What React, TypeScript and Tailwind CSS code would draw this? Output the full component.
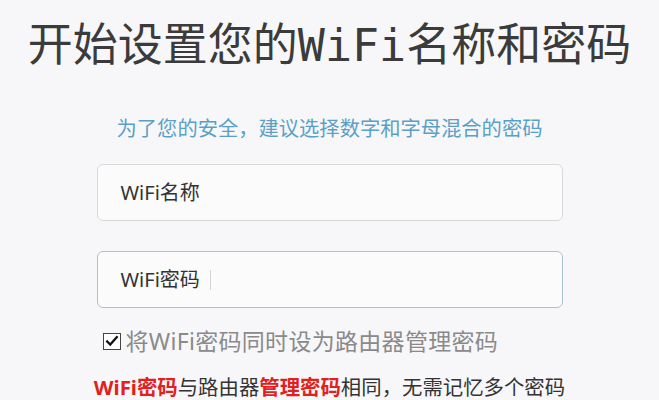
import React from "react";

const cjk = '"Noto Sans", "Noto Sans CJK SC", sans-serif';
const mono = '"DejaVu Sans Mono", "Noto Sans CJK SC", monospace';

function Field({ label, focused }: { label: string; focused?: boolean }) {
  return (
    <div
      className={
        "flex h-[57px] w-[466px] items-center rounded-[6px] bg-[#fbfbfc] pl-[23px] " +
        (focused
          ? "border-[1.5px] border-[#a8c3d2]"
          : "border border-[#d9d9dc]")
      }
    >
      <span className="text-[20px] leading-[20px] text-[#333]" style={{ fontFamily: cjk }}>
        {label}
      </span>
      {focused && <span className="ml-[10px] h-[20px] w-px bg-[#d4d4d4]" />}
    </div>
  );
}

export default function App() {
  return (
    <div className="flex h-[400px] w-[659px] flex-col items-center overflow-hidden bg-[#f7f7f9]">
      <h1
        className="mt-[23px] whitespace-nowrap text-[45px] font-normal leading-[45px] text-[#3b3b3b]"
        style={{ fontFamily: mono }}
      >
        开始设置您的WiFi名称和密码
      </h1>

      <p
        className="mt-[50px] text-[20.3px] leading-[20px] text-[#5b9fc6]"
        style={{ fontFamily: cjk }}
      >
        为了您的安全，建议选择数字和字母混合的密码
      </p>

      <div className="mt-[26px]">
        <Field label="WiFi名称" />
      </div>
      <div className="mt-[30px]">
        <Field label="WiFi密码" focused />
      </div>

      <div className="mt-[22px] flex w-[466px] items-center pl-[6px]">
        <span className="flex h-[17px] w-[18px] items-center justify-center border-[1.5px] border-[#444] bg-white">
          <svg viewBox="0 0 16 16" className="h-[14px] w-[14px]">
            <path d="M2.5 8.5 L6 12 L13.5 3.5" fill="none" stroke="#111" strokeWidth="2.6" strokeLinecap="square" />
          </svg>
        </span>
        <span
          className="ml-[5px] whitespace-nowrap text-[23px] leading-[22px] tracking-[0.3px] text-[#8a8a8a]"
          style={{ fontFamily: cjk }}
        >
          将WiFi密码同时设为路由器管理密码
        </span>
      </div>

      <p
        className="mt-[24px] whitespace-nowrap text-[20.4px] leading-[22px] text-[#333]"
        style={{ fontFamily: cjk }}
      >
        <span className="font-bold text-[#e3201b]">WiFi密码</span>
        与路由器
        <span className="font-bold text-[#e3201b]">管理密码</span>
        相同，无需记忆多个密码
      </p>
    </div>
  );
}
